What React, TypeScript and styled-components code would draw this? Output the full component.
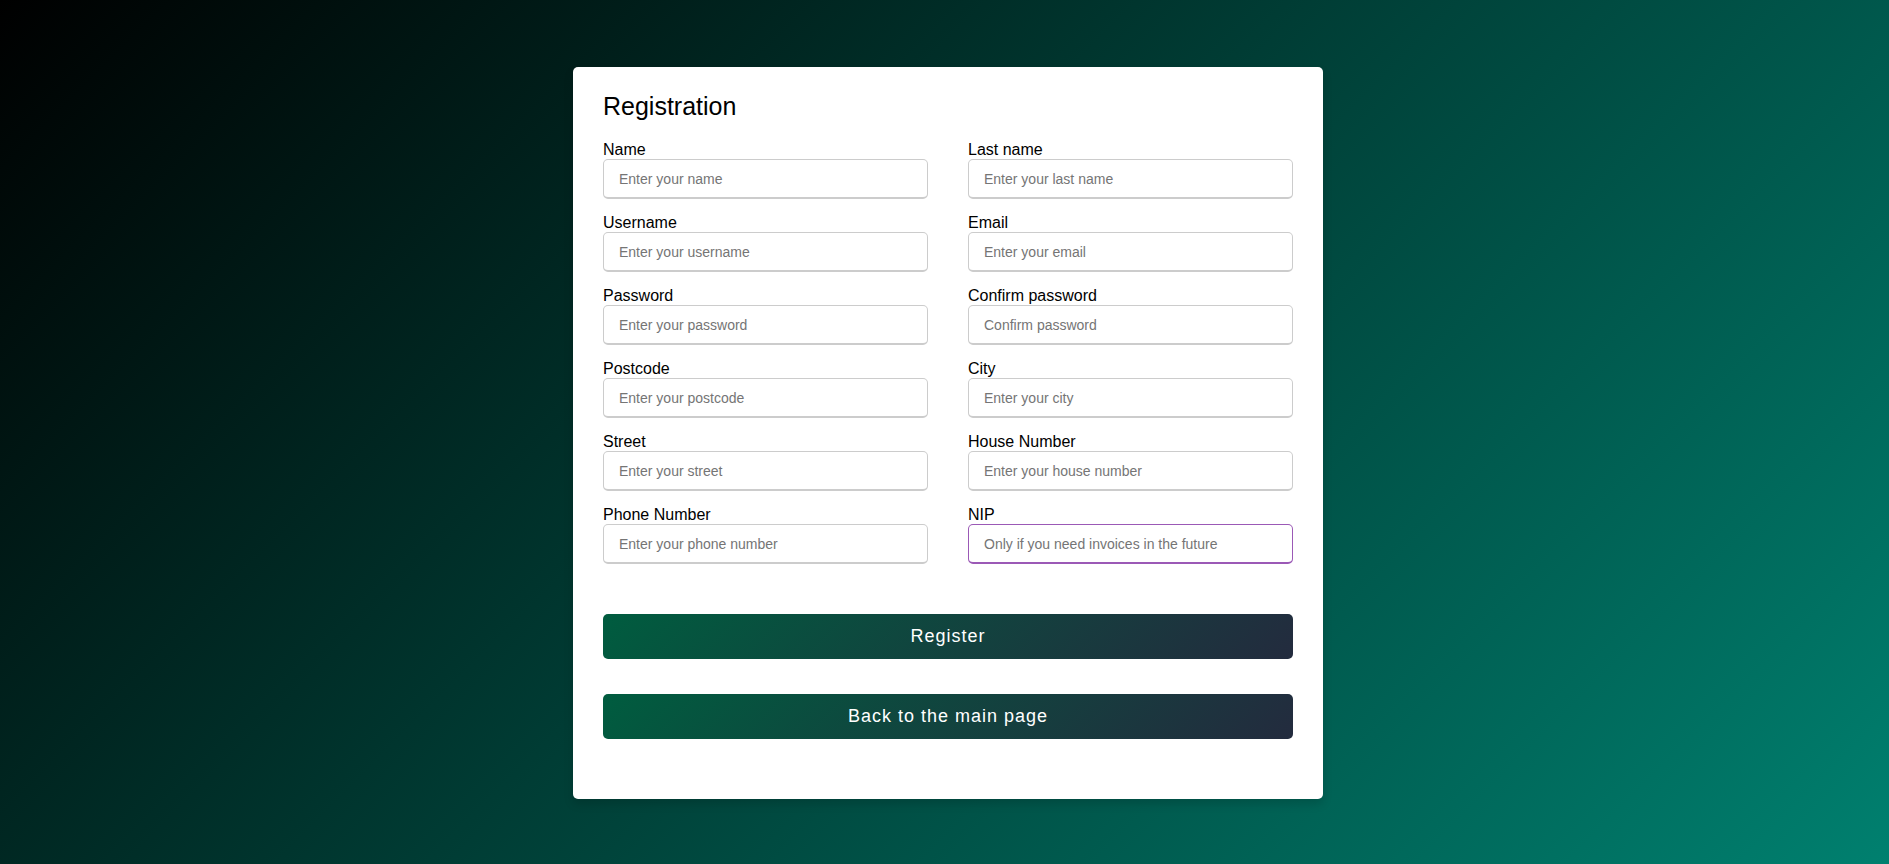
import React from 'react';
import styled, { createGlobalStyle } from 'styled-components';

const GlobalStyle = createGlobalStyle`
  * { margin: 0; padding: 0; box-sizing: border-box; }
  body { font-family: "Liberation Sans", Arial, sans-serif; }
`;

const Page = styled.main`
  display: flex;
  justify-content: center;
  align-items: center;
  min-height: 100vh;
  padding: 12px 10px 10px 17px;
  background: linear-gradient(135deg, #000000, #00806f);
`;

const Card = styled.section`
  width: 100%;
  max-width: 750px;
  padding: 25px 30px;
  border-radius: 5px;
  background: #fff;
  box-shadow: 0 5px 10px rgba(0, 0, 0, 0.15);
`;

const Title = styled.h1`
  font-size: 25px;
  font-weight: 400;
  line-height: 29px;
`;

const Fields = styled.div`
  display: flex;
  flex-wrap: wrap;
  justify-content: space-between;
  margin: 20px 0 12px;
`;

const Field = styled.div`
  width: calc(100% / 2 - 20px);
  margin-bottom: 15px;
`;

const Label = styled.label`
  display: block;
  font-size: 16px;
  line-height: 18px;
`;

const Input = styled.input<{ $active?: boolean }>`
  display: block;
  width: 100%;
  height: 40px;
  padding-left: 15px;
  border: 1px solid ${(p) => (p.$active ? '#9b59b6' : '#ccc')};
  border-bottom-width: 2px;
  border-radius: 5px;
  outline: none;
  background: #fff;
  font-family: inherit;
  font-size: 14px;
  &:focus { border-color: #9b59b6; }
`;

const Actions = styled.div`
  display: grid;
  gap: 35px;
  padding: 23px 0 35px;
`;

const Button = styled.button`
  width: 100%;
  height: 45px;
  border: none;
  border-radius: 5px;
  background: linear-gradient(135deg, #005c3f, #232b3e);
  color: #fff;
  font-family: inherit;
  font-size: 18px;
  font-weight: 500;
  letter-spacing: 1px;
  cursor: pointer;
`;

const fields = [
  { id: 'name', label: 'Name', hint: 'Enter your name' },
  { id: 'lastName', label: 'Last name', hint: 'Enter your last name' },
  { id: 'username', label: 'Username', hint: 'Enter your username' },
  { id: 'email', label: 'Email', hint: 'Enter your email', type: 'email' },
  { id: 'password', label: 'Password', hint: 'Enter your password', type: 'password' },
  { id: 'confirm', label: 'Confirm password', hint: 'Confirm password', type: 'password' },
  { id: 'postcode', label: 'Postcode', hint: 'Enter your postcode' },
  { id: 'city', label: 'City', hint: 'Enter your city' },
  { id: 'street', label: 'Street', hint: 'Enter your street' },
  { id: 'house', label: 'House Number', hint: 'Enter your house number' },
  { id: 'phone', label: 'Phone Number', hint: 'Enter your phone number', type: 'tel' },
  { id: 'nip', label: 'NIP', hint: 'Only if you need invoices in the future', active: true },
];

export default function App() {
  return (
    <Page>
      <GlobalStyle />
      <Card>
        <Title>Registration</Title>
        <form onSubmit={(e) => e.preventDefault()}>
          <Fields>
            {fields.map((f) => (
              <Field key={f.id}>
                <Label htmlFor={f.id}>{f.label}</Label>
                <Input id={f.id} type={f.type ?? 'text'} placeholder={f.hint} $active={f.active} />
              </Field>
            ))}
          </Fields>
          <Actions>
            <Button type="submit">Register</Button>
            <Button type="button">Back to the main page</Button>
          </Actions>
        </form>
      </Card>
    </Page>
  );
}
